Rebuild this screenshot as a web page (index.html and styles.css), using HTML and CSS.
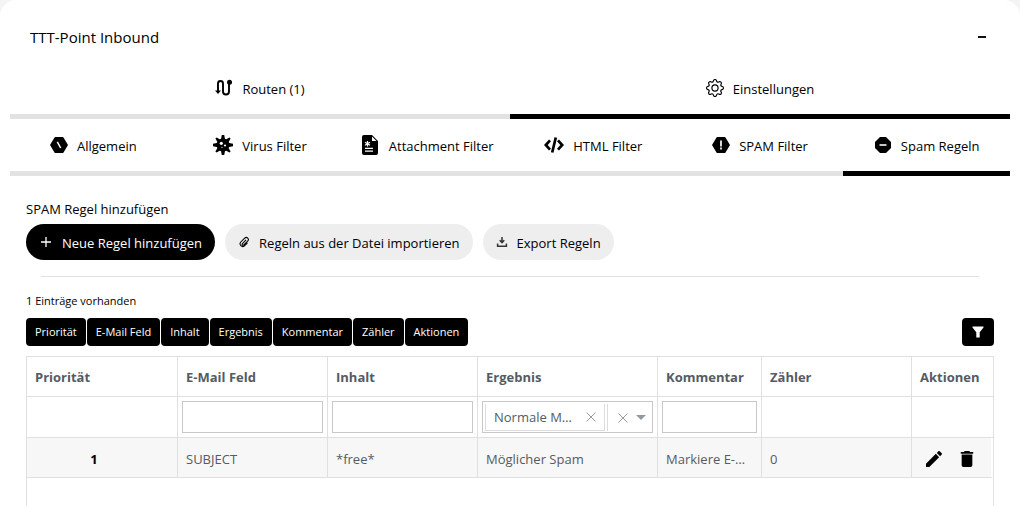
FILE: index.html
```html
<!DOCTYPE html>
<html lang="de">
<head>
<meta charset="utf-8">
<title>TTT-Point Inbound</title>
<link rel="stylesheet" href="styles.css">
</head>
<body>
<main class="card">
  <header class="card-header">
    <h1 class="card-title">TTT-Point Inbound</h1>
    <button class="collapse" type="button" aria-label="Einklappen"><span class="collapse-bar"></span></button>
  </header>

  <nav class="tabs" aria-label="Bereiche">
    <button class="tab" type="button">
      <svg class="icon" viewBox="0 0 18 18"><path d="M3 13V4.500Q3 2 5.500 2T8 4.500v8q0 3 3 3t3-3V4" fill="none" stroke="currentColor" stroke-width="1.900"/><circle cx="14.500" cy="3.200" r="2.500"/><path d="M0 11.500h6L3 15z"/></svg>
      Routen (1)
    </button>
    <button class="tab active" type="button">
      <svg class="icon" viewBox="0 0 16 16"><path d="M8 4.754a3.246 3.246 0 1 0 0 6.492 3.246 3.246 0 0 0 0-6.492M5.754 8a2.246 2.246 0 1 1 4.492 0 2.246 2.246 0 0 1-4.492 0"/><path d="M9.796 1.343c-.527-1.790-3.065-1.790-3.592 0l-.094.319a.873.873 0 0 1-1.255.520l-.292-.160c-1.640-.892-3.433.902-2.540 2.541l.159.292a.873.873 0 0 1-.520 1.255l-.319.094c-1.790.527-1.790 3.065 0 3.592l.319.094a.873.873 0 0 1 .520 1.255l-.160.292c-.892 1.640.901 3.434 2.541 2.540l.292-.159a.873.873 0 0 1 1.255.520l.094.319c.527 1.790 3.065 1.790 3.592 0l.094-.319a.873.873 0 0 1 1.255-.520l.292.160c1.640.893 3.434-.902 2.540-2.541l-.159-.292a.873.873 0 0 1 .520-1.255l.319-.094c1.790-.527 1.790-3.065 0-3.592l-.319-.094a.873.873 0 0 1-.520-1.255l.160-.292c.893-1.640-.902-3.433-2.541-2.540l-.292.159a.873.873 0 0 1-1.255-.520zm-2.633.283c.246-.835 1.428-.835 1.674 0l.094.319a1.873 1.873 0 0 0 2.693 1.115l.291-.160c.764-.415 1.600.420 1.184 1.185l-.159.292a1.873 1.873 0 0 0 1.116 2.692l.318.094c.835.246.835 1.428 0 1.674l-.319.094a1.873 1.873 0 0 0-1.115 2.693l.160.291c.415.764-.420 1.600-1.185 1.184l-.291-.159a1.873 1.873 0 0 0-2.693 1.116l-.094.318c-.246.835-1.428.835-1.674 0l-.094-.319a1.873 1.873 0 0 0-2.692-1.115l-.292.160c-.764.415-1.600-.420-1.184-1.185l.159-.291A1.873 1.873 0 0 0 1.945 8.930l-.319-.094c-.835-.246-.835-1.428 0-1.674l.319-.094A1.873 1.873 0 0 0 3.060 4.377l-.160-.292c-.415-.764.420-1.600 1.185-1.184l.292.159a1.873 1.873 0 0 0 2.692-1.115z"/></svg>
      Einstellungen
    </button>
  </nav>

  <nav class="tabs" aria-label="Einstellungen">
    <button class="tab" type="button">
      <svg class="icon" viewBox="0 0 18 18"><path d="M5.500 1h7q.7 0 1 .6L18 9l-4.500 7.400q-.3.600-1 .6h-7q-.7 0-1-.6L0 9l4.500-7.400q.3-.6 1-.6z"/><path d="M7.300 5.800l3.400 6.200" stroke="#fff" stroke-width="1.500"/></svg>
      Allgemein
    </button>
    <button class="tab" type="button">
      <svg class="icon-lg" viewBox="0 0 20 20"><circle cx="10" cy="10" r="6.500"/><path d="M8.800 0h2.400l1 5h-4.400zM8.800 20h2.400l1-5h-4.400zM0 8.800v2.400l5 1V7.800zM20 8.800v2.400l-5 1V7.800zM2.400 3.600l1.200-1.200L8 5 5 8zM17.600 3.600l-1.200-1.200L12 5l3 3zM2.400 16.400l1.200 1.200L8 15l-3-3zM17.600 16.400l-1.200 1.200L12 15l3-3z"/><circle cx="8.300" cy="8.300" r="1.600" fill="#fff"/><circle cx="12" cy="10.500" r="1.100" fill="#fff"/><circle cx="9" cy="12.300" r=".6" fill="#fff"/></svg>
      Virus Filter
    </button>
    <button class="tab" type="button">
      <svg class="icon-lg" viewBox="0 0 20 20"><path d="M4 0h8l6 6v12a2 2 0 0 1-2 2H4a2 2 0 0 1-2-2V2a2 2 0 0 1 2-2z"/><path d="M12 1.500V6h4.500z" fill="#fff"/><path d="M7.500 6v5.500M5 7.300l5 2.900M10 7.300l-5 2.900M5 13.300h8M5 16.200h8" stroke="#fff" stroke-width="1.200"/></svg>
      Attachment Filter
    </button>
    <button class="tab" type="button">
      <svg class="icon-lg" viewBox="0 0 20 20"><path d="M6 5.300L1.800 10 6 14.700M14 5.300l4.200 4.700-4.200 4.700M11.800 2.500L8.200 17.500" fill="none" stroke="currentColor" stroke-width="2.700"/></svg>
      HTML Filter
    </button>
    <button class="tab" type="button">
      <svg class="icon" viewBox="0 0 18 18"><path d="M5.500 1h7q.7 0 1 .6L18 9l-4.500 7.400q-.3.600-1 .6h-7q-.7 0-1-.6L0 9l4.500-7.400q.3-.6 1-.6z"/><path d="M9 4.500v6M9 11.600v2" stroke="#fff" stroke-width="1.700"/></svg>
      SPAM Filter
    </button>
    <button class="tab active" type="button">
      <svg class="icon" viewBox="0 0 18 18"><path d="M6 1h6l5 5v6l-5 5H6l-5-5V6z"/><path d="M5.500 9h7" stroke="#ddd" stroke-width="1.800"/></svg>
      Spam Regeln
    </button>
  </nav>

  <section class="content">
    <p class="label">SPAM Regel hinzufügen</p>
    <div class="actions">
      <button class="pill primary" type="button">
        <svg class="icon-sm" viewBox="0 0 12 12"><path d="M6 1v10M1 6h10" stroke="currentColor" stroke-width="1.300"/></svg>
        Neue Regel hinzufügen
      </button>
      <button class="pill" type="button">
        <svg class="icon-sm" viewBox="-1 -1 26 26"><path d="M16.500 7.500L8.500 15.500a2 2 0 0 0 3 3l8.500-8.500a4.500 4.500 0 0 0-6.500-6.500L4.500 12.500a6 6 0 0 0 8 8.500l7-7" fill="none" stroke="currentColor" stroke-width="2.300"/></svg>
        Regeln aus der Datei importieren
      </button>
      <button class="pill" type="button">
        <svg class="icon-sm" viewBox="0 0 12 12"><path d="M6 1v5M3.700 4.300L6 6.600l2.300-2.300M1.600 7.500v2.700h8.800V7.500" fill="none" stroke="#333" stroke-width="1.500"/></svg>
        Export Regeln
      </button>
    </div>
    <hr class="rule">
    <p class="count">1 Einträge vorhanden</p>
    <div class="toolbar">
      <div class="columns">
        <button class="chip" type="button">Priorität</button>
        <button class="chip" type="button">E-Mail Feld</button>
        <button class="chip" type="button">Inhalt</button>
        <button class="chip" type="button">Ergebnis</button>
        <button class="chip" type="button">Kommentar</button>
        <button class="chip" type="button">Zähler</button>
        <button class="chip" type="button">Aktionen</button>
      </div>
      <button class="chip filter-button" type="button" aria-label="Filter"><svg class="icon-sm" viewBox="0 0 12 12"><path d="M.5.500h11v1L7.700 6.300V11.500H4.300V6.300L.5 1.500z"/></svg></button>
    </div>

    <div class="grid">
      <table class="table">
        <colgroup><col class="c-prio"><col class="c-mid"><col class="c-mid"><col class="c-result"><col class="c-comment"><col class="c-mid"><col></colgroup>
        <thead>
          <tr class="head"><th>Priorität</th><th>E-Mail Feld</th><th>Inhalt</th><th>Ergebnis</th><th>Kommentar</th><th>Zähler</th><th>Aktionen</th></tr>
          <tr class="filters">
            <td></td>
            <td><input class="field" type="text" aria-label="E-Mail Feld filtern"></td>
            <td><input class="field" type="text" aria-label="Inhalt filtern"></td>
            <td>
              <div class="multi">
                <span class="tag">Normale M…<button type="button" aria-label="Entfernen"><svg class="cross" viewBox="0 0 12 12"><path d="M1.500 1.500l9 9M10.500 1.500l-9 9"/></svg></button></span>
                <span class="multi-tools">
                  <button type="button" aria-label="Alle entfernen"><svg class="cross" viewBox="0 0 12 12"><path d="M1.500 1.500l9 9M10.500 1.500l-9 9"/></svg></button>
                  <button type="button" aria-label="Auswahl öffnen"><svg class="caret" viewBox="0 0 10 5"><path d="M0 0h10L5 5z"/></svg></button>
                </span>
              </div>
            </td>
            <td><input class="field" type="text" aria-label="Kommentar filtern"></td>
            <td></td>
            <td></td>
          </tr>
        </thead>
        <tbody>
          <tr class="row">
            <td class="prio">1</td><td>SUBJECT</td><td>*free*</td><td>Möglicher Spam</td><td>Markiere E-…</td><td>0</td>
            <td class="row-tools">
              <div class="tools">
                <button type="button" aria-label="Bearbeiten"><svg class="icon-row" viewBox="3 3 18 18"><path d="M20.710 7.040c.39-.39.39-1.040 0-1.410l-2.340-2.340c-.37-.39-1.020-.39-1.410 0l-1.840 1.830 3.750 3.750M3 17.250V21h3.750L17.810 9.930l-3.750-3.750z"/></svg></button>
                <button type="button" aria-label="Löschen"><svg class="icon-row" viewBox="3 3 18 18"><path d="M19 4h-3.500l-1-1h-5l-1 1H5v2h14M6 19a2 2 0 0 0 2 2h8a2 2 0 0 0 2-2V7H6z"/></svg></button>
              </div>
            </td>
          </tr>
        </tbody>
      </table>
    </div>
  </section>
</main>
</body>
</html>
```
FILE: styles.css
```css
* { box-sizing: border-box; }
html, body { height: 100%; }
body {
  margin: 0;
  overflow: hidden;
  background: #f4f4f4;
  color: #000;
  font-family: "Segoe UI", "Open Sans", "Noto Sans", sans-serif;
  font-size: 13px;
}
button { font: inherit; color: inherit; border: 0; background: none; padding: 0; cursor: pointer; }
svg { display: block; flex: none; fill: currentColor; }

.card {
  display: flex;
  flex-direction: column;
  min-height: 100%;
  padding: 0 10px;
  background: #fff;
  border-radius: 16px 16px 0 0;
}
.card-header {
  display: flex;
  align-items: center;
  justify-content: space-between;
  padding: 24px 20px 12px;
}
.card-title { margin: 0; font-size: 15px; font-weight: 400; line-height: 26px; }
.collapse { display: flex; justify-content: center; width: 16px; padding: 8px 0; }
.collapse-bar { width: 8px; height: 2px; background: #111; }

.tabs { display: flex; }
.tab {
  flex: 1 1 0;
  display: flex;
  align-items: center;
  justify-content: center;
  gap: 9px;
  height: 57px;
  padding-top: 2px;
  border-bottom: 5px solid #e2e2e2;
  white-space: nowrap;
}
.tab.active { border-bottom-color: #000; }
.icon { width: 18px; height: 18px; margin-bottom: 2px; }
.icon-lg { width: 20px; height: 20px; margin-bottom: 2px; }
.icon-sm { width: 12px; height: 12px; }
.icon-row { width: 16px; height: 16px; }

.content { display: flex; flex-direction: column; flex: 1; padding: 24px 16px 0; }
.label { margin: 0 0 6px; line-height: 18px; }
.actions { display: flex; gap: 10px; }
.pill {
  display: flex;
  align-items: center;
  gap: 9px;
  height: 36px;
  padding: 2px 13px 0;
  border-radius: 18px;
  background: #eee;
  white-space: nowrap;
}
.pill .icon-sm { margin-bottom: 2px; }
.pill.primary { gap: 10px; padding-left: 14px; background: #000; color: #fff; }
.rule { width: auto; height: 1px; margin: 16px 15px; border: 0; background: #e0e0e0; }
.count { margin: 0 0 9px; font-size: 11px; line-height: 16px; }
.toolbar { display: flex; justify-content: space-between; margin-bottom: 10px; }
.columns { display: flex; gap: 1px; }
.chip {
  height: 28px;
  padding: 0 9px 1px;
  border-radius: 4px;
  background: #000;
  color: #fff;
  font-size: 11px;
}
.filter-button { width: 32px; padding: 0 10px; }

.grid { flex: 1; border: 1px solid #e0e0e0; border-bottom: 0; color: #545b64; }
.table { width: 100%; table-layout: fixed; border-spacing: 0; }
.c-prio { width: 151px; }
.c-mid { width: 150px; }
.c-result { width: 180px; }
.c-comment { width: 104px; }
.table th, .table td {
  padding: 0 8px;
  border-right: 1px solid #e0e0e0;
  border-bottom: 1px solid #e0e0e0;
  text-align: left;
  white-space: nowrap;
}
.table th:last-child, .table .filters td:last-child { border-right: 0; }
.head { height: 40px; }
.head th { font-weight: 700; }
.filters { height: 41px; }
.table .filters td { padding: 0 4px; }
.row { height: 40px; }
.row td { background: #f7f7f7; padding-top: 2px; }
.table .prio { text-align: center; padding-right: 24px; color: #000; font-weight: 700; }
.table .row-tools { border-right: 2px solid #fff; color: #000; }
.tools { display: flex; gap: 17px; padding-left: 6px; }
.field {
  display: block;
  width: 100%;
  height: 32px;
  border: 1px solid #c8c8c8;
  background: #fff;
  font: inherit;
}
.multi {
  display: flex;
  gap: 2px;
  height: 32px;
  padding: 2px 2px 1px;
  border: 1px solid #c8c8c8;
}
.tag {
  display: flex;
  align-items: center;
  justify-content: space-between;
  flex: 1;
  min-width: 0;
  padding: 0 7px 0 8px;
  border: 1px solid #ddd;
  border-top: 0;
}
.multi-tools { display: flex; align-items: center; gap: 7px; padding: 0 4px 0 9px; border-left: 1px solid #ddd; }
.cross { width: 12px; height: 12px; fill: none; stroke: #9299a1; }
.caret { width: 10px; height: 5px; fill: #9299a1; }
```
